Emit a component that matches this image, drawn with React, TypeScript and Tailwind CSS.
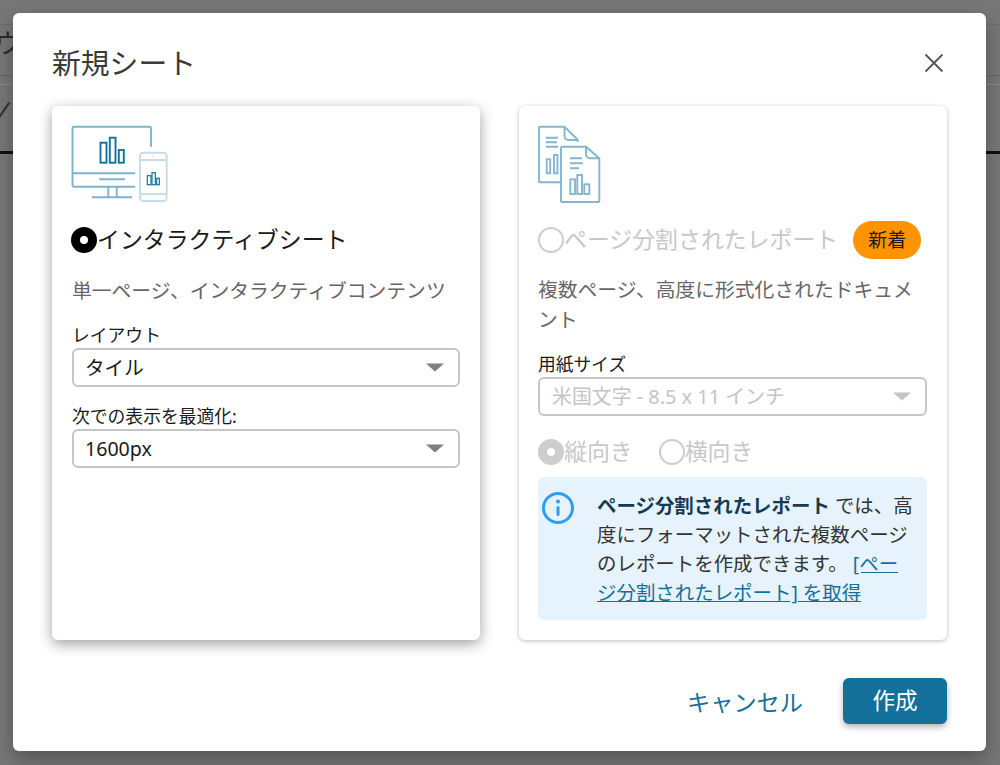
const F = "font-['Noto_Sans','Noto_Sans_CJK_JP',sans-serif]";

function Caret({ c = "#808080" }: { c?: string }) {
  return (
    <svg width="18" height="9" viewBox="0 0 18 9" className="shrink-0">
      <path d="M0 0.5h18L9 8.5z" fill={c} />
    </svg>
  );
}

function Select({ value, disabled }: { value: string; disabled?: boolean }) {
  return (
    <div className={`flex h-[39px] items-center justify-between rounded-[6px] border-2 border-[#c6c6c6] pr-[14px] ${disabled ? "pl-[12px] text-[19.900px] text-[#c4c4c4]" : "pl-[11px] text-[19.600px] text-[#1a1a1a]"}`}>
      <span>{value}</span>
      <Caret c={disabled ? "#c4c4c4" : "#808080"} />
    </div>
  );
}

function Radio({ state }: { state: "black" | "grey" | "empty" }) {
  if (state === "empty") return <span className="h-[26px] w-[26px] shrink-0 rounded-full border-2 border-[#cdcdcd] bg-white" />;
  return (
    <span className={`flex h-[26px] w-[26px] shrink-0 items-center justify-center rounded-full ${state === "black" ? "bg-black" : "bg-[#cdcdcd]"}`}>
      <span className="h-[8px] w-[8px] rounded-full bg-white" />
    </span>
  );
}

function DesktopIcon() {
  const a = "#7fb3cd", b = "#c6dce8", d = "#15719c";
  return (
    <svg width="98" height="78" viewBox="0 0 98 78" fill="none" strokeWidth="1.9" className="-ml-[1px]">
      <path d="M80 21.700V3a1.200 1.200 0 0 0-1.200-1.200H2.700A1.200 1.200 0 0 0 1.500 3v57.500a1.200 1.200 0 0 0 1.200 1.200h61.600M1.500 48.300h62.800M28.300 54.300H54M37.300 62v10.300M45.700 62v10.300M20.700 72.300H61" stroke={a} />
      <rect x="29.500" y="17.700" width="6" height="20" stroke={d} />
      <rect x="38.800" y="12.700" width="5.700" height="25" stroke={d} />
      <rect x="47.800" y="25" width="5" height="12.700" stroke={d} />
      <rect x="69" y="27.700" width="26.700" height="48.300" rx="3.500" stroke={b} />
      <path d="M69 35h26.700M69 69h26.700" stroke={b} />
      <rect x="81" y="31" width="2" height="1" fill={b} />
      <rect x="76.300" y="50.700" width="3.700" height="9" stroke={d} strokeWidth="1.200" />
      <rect x="81" y="47.700" width="3.300" height="12" stroke={d} strokeWidth="1.200" />
      <rect x="85.700" y="53.300" width="2.600" height="6.400" stroke={d} strokeWidth="1.200" />
    </svg>
  );
}

function ReportIcon() {
  const a = "#84b6ce";
  return (
    <svg width="64" height="78" viewBox="0 0 64 78" fill="none" stroke={a} strokeWidth="1.900" className="-ml-[1px]">
      <path d="M40.700 17v-2.300L27.500 1.700H3a1 1 0 0 0-1 1v53.600a1 1 0 0 0 1 1h20M27.500 1.700V11a4 4 0 0 0 4 4h9.200" />
      <path d="M8.700 12.700H21M8.700 17.300H20M8.700 21.700H21" />
      <rect x="9.700" y="34.300" width="3.500" height="14" />
      <rect x="17" y="30" width="3.500" height="18.300" />
      <path d="M62.300 33.300V76a1 1 0 0 1-1 1H25a1 1 0 0 1-1-1V22.700a1 1 0 0 1 1-1h24l13.300 11.600zM49 21.700V29.300a4 4 0 0 0 4 4h9.300" />
      <path d="M33 33.300h12M33 38.300h13M33 43.300h9" />
      <rect x="33.300" y="54.300" width="4.700" height="14.700" />
      <rect x="40.300" y="50" width="4.700" height="19" />
      <rect x="47.300" y="59.300" width="5" height="9.700" />
    </svg>
  );
}

export default function App() {
  return (
    <div className={`relative h-[765px] w-[1000px] overflow-hidden bg-[#777777] ${F}`}>
      <div className="absolute left-0 top-[24px] h-[1px] w-full bg-[#6c6c6c]" />
      <span className="absolute left-[-5px] top-[24px] text-[26px] text-[#2b2b2b]">ウ</span>
      <div className="absolute left-0 top-[75px] h-[1px] w-full bg-[#666666]" />
      <div className="absolute left-0 top-[84px] h-[1px] w-full bg-[#8a8a8a]" />
      <div className="absolute left-0 top-[151px] h-[3px] w-full bg-[#111111]" />
      <span className="absolute left-[-1px] top-[91px] rotate-[14deg] text-[26px] text-[#333333]">/</span>

      <div className="absolute left-[13px] top-[13px] flex h-[738px] w-[973px] flex-col rounded-[6px] bg-white px-[39px] shadow-[0_8px_20px_rgba(0,0,0,0.3)]">
        <div className="flex h-[93px] shrink-0 items-start justify-between">
          <h1 className="mt-[29px] text-[28.800px] leading-[42px] text-[#3a3a3a]">新規シート</h1>
          <svg width="20" height="20" viewBox="0 0 20 20" className="mt-[40px] mr-[3px]" stroke="#555555" strokeWidth="1.800">
            <path d="M1.500 1.500l17 17M18.500 1.500l-17 17" />
          </svg>
        </div>

        <div className="flex h-[534px] shrink-0 gap-[39px]">
          <div className="flex w-[428px] flex-col rounded-[6px] bg-white px-[20px] pt-[19px] shadow-[0_4px_14px_rgba(0,0,0,0.38)]">
            <DesktopIcon />
            <div className="mt-[23px] flex h-[28px] items-center text-[22.900px] text-[#1a1a1a]">
              <span className="-ml-[1px] flex"><Radio state="black" /></span>
              <span>インタラクティブシート</span>
            </div>
            <p className="mt-[22px] text-[19.800px] leading-[30px] text-[#666666]">単一ページ、インタラクティブコンテンツ</p>
            <label className="mt-[16px] block text-[17.800px] leading-[26px] text-[#1a1a1a]">レイアウト</label>
            <Select value="タイル" />
            <label className="mt-[16px] block text-[17.800px] leading-[26px] text-[#1a1a1a]">次での表示を最適化:</label>
            <Select value="1600px" />
          </div>

          <div className="flex w-[428px] flex-col rounded-[6px] bg-white pl-[19px] pr-[20px] pt-[19px] shadow-[0_1px_4px_rgba(0,0,0,0.28)]">
            <ReportIcon />
            <div className="mt-[17px] flex h-[40px] items-center text-[22.900px] text-[#c8c8c8]">
              <Radio state="empty" />
              <span>ページ分割されたレポート</span>
              <span className="ml-[15px] flex h-[38px] w-[68px] items-center justify-center rounded-full bg-[#ff9400] text-[19px] text-[#1a1a1a]">新着</span>
            </div>
            <p className="mt-[15px] text-[19.800px] leading-[30px] text-[#666666]">複数ページ、高度に形式化されたドキュメント</p>
            <label className="mt-[16px] block text-[17.800px] leading-[26px] text-[#1a1a1a]">用紙サイズ</label>
            <Select value="米国文字 - 8.5 x 11 インチ" disabled />
            <div className="mt-[22px] flex h-[28px] items-center text-[22.900px] text-[#c8c8c8]">
              <Radio state="grey" />
              <span>縦向き</span>
              <span className="ml-[26px] flex items-center">
                <Radio state="empty" />
                <span>横向き</span>
              </span>
            </div>
            <div className="mt-[11px] flex h-[143px] rounded-[6px] bg-[#e6f3fc] pl-[3px] pr-[12px] pt-[14px]">
              <svg width="34" height="34" viewBox="0 0 34 34" fill="none" className="shrink-0">
                <circle cx="17" cy="17" r="14.500" stroke="#2e9df0" strokeWidth="3" />
                <circle cx="17" cy="10.500" r="2" fill="#2e9df0" />
                <rect x="15.500" y="15" width="3" height="10" rx="1.500" fill="#2e9df0" />
              </svg>
              <p className="ml-[22px] text-[19.450px] leading-[29px] text-[#333333]">
                <b className="font-bold text-[#163a52]">ページ分割されたレポート</b> では、高度にフォーマットされた複数ページのレポートを作成できます。 <a className="text-[#13709a] underline">[ページ分割されたレポート] を取得</a>
              </p>
            </div>
          </div>
        </div>

        <div className="flex flex-1 items-start justify-end pt-[38px]">
          <button className="mr-[40px] mt-[9px] text-[23.200px] leading-[30px] text-[#13709a]">キャンセル</button>
          <button className="h-[46px] w-[104px] rounded-[6px] bg-[#13709a] text-[22.600px] text-white shadow-[0_3px_6px_rgba(0,0,0,0.3)]">作成</button>
        </div>
      </div>
    </div>
  );
}
